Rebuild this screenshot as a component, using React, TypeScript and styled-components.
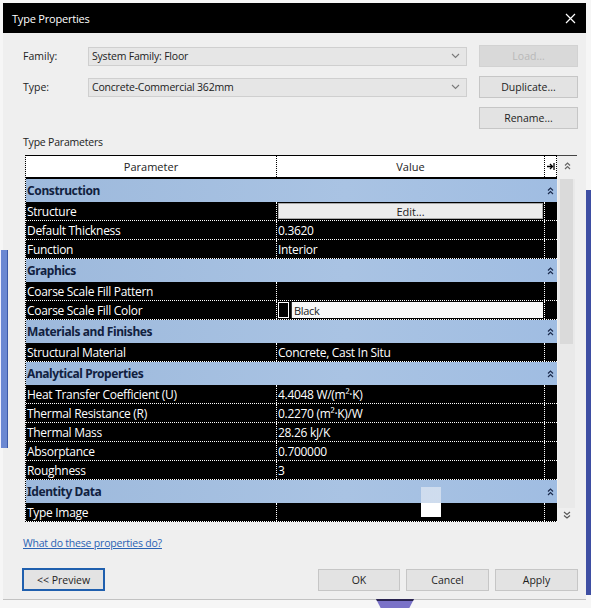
import React from "react";
import styled, { createGlobalStyle } from "styled-components";

type Row = {
  name: string;
  value: string;
  kind?: "text" | "button" | "color";
};

type Group = {
  title: string;
  rows: Row[];
};

const groups: Group[] = [
  {
    title: "Construction",
    rows: [
      { name: "Structure", value: "Edit...", kind: "button" },
      { name: "Default Thickness", value: "0.3620" },
      { name: "Function", value: "Interior" },
    ],
  },
  {
    title: "Graphics",
    rows: [
      { name: "Coarse Scale Fill Pattern", value: "" },
      { name: "Coarse Scale Fill Color", value: "Black", kind: "color" },
    ],
  },
  {
    title: "Materials and Finishes",
    rows: [{ name: "Structural Material", value: "Concrete, Cast In Situ" }],
  },
  {
    title: "Analytical Properties",
    rows: [
      { name: "Heat Transfer Coefficient (U)", value: "4.4048 W/(m²·K)" },
      { name: "Thermal Resistance (R)", value: "0.2270 (m²·K)/W" },
      { name: "Thermal Mass", value: "28.26 kJ/K" },
      { name: "Absorptance", value: "0.700000" },
      { name: "Roughness", value: "3" },
    ],
  },
  {
    title: "Identity Data",
    rows: [{ name: "Type Image", value: "" }],
  },
];

const ChevronsUp: React.FC<{ color?: string }> = ({ color = "#1b2b4d" }) => (
  <svg width="7" height="8" viewBox="0 0 7 8">
    <polyline points="1,3.5 3.5,1 6,3.5" fill="none" stroke={color} strokeWidth="1.2" />
    <polyline points="1,7 3.5,4.5 6,7" fill="none" stroke={color} strokeWidth="1.2" />
  </svg>
);

const ChevronsDown: React.FC<{ color?: string }> = ({ color = "#555" }) => (
  <svg width="8" height="8" viewBox="0 0 8 8">
    <polyline points="1,1 4,3.5 7,1" fill="none" stroke={color} strokeWidth="1.1" />
    <polyline points="1,4.5 4,7 7,4.5" fill="none" stroke={color} strokeWidth="1.1" />
  </svg>
);

const ComboArrow = () => (
  <svg width="9" height="6" viewBox="0 0 9 6">
    <polyline points="1,1 4.5,4.5 8,1" fill="none" stroke="#7a7a7a" strokeWidth="1.1" />
  </svg>
);

const SortIcon = () => (
  <svg width="8" height="7" viewBox="0 0 8 7">
    <path d="M0 3.5h5M3 1l2.5 2.5L3 6" fill="none" stroke="#000" strokeWidth="1.3" />
    <path d="M7 0v7" stroke="#000" strokeWidth="1.3" />
  </svg>
);

const CloseIcon = () => (
  <svg width="11" height="11" viewBox="0 0 11 11">
    <path d="M1 1l9 9M10 1l-9 9" stroke="#fff" strokeWidth="1.2" />
  </svg>
);

const App: React.FC = () => {
  return (
    <Page>
      <GlobalStyle />
      <Dialog>
        <TitleBar>
          <Title>Type Properties</Title>
          <CloseIcon />
        </TitleBar>

        <Body>
          <TopGrid>
            <FieldLabel>Family:</FieldLabel>
            <Combo>
              <span>System Family: Floor</span>
              <ComboArrow />
            </Combo>
            <DialogButton disabled>Load...</DialogButton>

            <FieldLabel>Type:</FieldLabel>
            <Combo>
              <span>Concrete-Commercial 362mm</span>
              <ComboArrow />
            </Combo>
            <DialogButton>Duplicate...</DialogButton>

            <GridSpacer />
            <GridSpacer />
            <DialogButton>Rename...</DialogButton>
          </TopGrid>

          <SectionLabel>Type Parameters</SectionLabel>

          <TableArea>
            <Table>
              <HeaderRow>
                <HeaderCell>Parameter</HeaderCell>
                <HeaderCell>Value</HeaderCell>
                <HeaderCell>
                  <SortIcon />
                </HeaderCell>
              </HeaderRow>

              {groups.map((group) => (
                <React.Fragment key={group.title}>
                  <GroupRow>
                    <span>{group.title}</span>
                    <ChevronsUp />
                  </GroupRow>
                  {group.rows.map((row) => (
                    <DataRow key={row.name}>
                      <NameCell>{row.name}</NameCell>
                      {row.kind === "button" ? (
                        <ValueCell $light>
                          <EditButton>{row.value}</EditButton>
                        </ValueCell>
                      ) : row.kind === "color" ? (
                        <ValueCell $light>
                          <Swatch />
                          <SwatchText>{row.value}</SwatchText>
                        </ValueCell>
                      ) : (
                        <ValueCell>{row.value}</ValueCell>
                      )}
                      <EndCell />
                    </DataRow>
                  ))}
                </React.Fragment>
              ))}

              <Glitch />
            </Table>

            <Scrollbar>
              <ScrollTop>
                <ChevronsUp color="#666" />
              </ScrollTop>
              <ScrollTrack>
                <ScrollThumb />
              </ScrollTrack>
              <ScrollBottom>
                <ChevronsDown />
              </ScrollBottom>
            </Scrollbar>
          </TableArea>

          <HelpLink>What do these properties do?</HelpLink>

          <Footer>
            <PreviewButton>&lt;&lt; Preview</PreviewButton>
            <FooterRight>
              <DialogButton $w={82}>OK</DialogButton>
              <DialogButton $w={83}>Cancel</DialogButton>
              <DialogButton $w={83}>Apply</DialogButton>
            </FooterRight>
          </Footer>
        </Body>
      </Dialog>

      <LeftStrip />
      <RightStrip />
      <BottomTab />
    </Page>
  );
};

const GlobalStyle = createGlobalStyle`
  html, body {
    margin: 0;
    padding: 0;
    background: #f4f4f4;
  }
  body {
    font-family: "Open Sans", "Noto Sans", sans-serif;
  }
`;

const Page = styled.div`
  position: relative;
  width: 591px;
  height: 608px;
  overflow: hidden;
  padding: 3px 5px 0 3px;
  box-sizing: border-box;
  background: #f6f6f6;
`;

const Dialog = styled.div`
  width: 583px;
  height: 597px;
  display: flex;
  flex-direction: column;
  background: #efefef;
  border-bottom: 1px solid #c2c2c2;
  box-sizing: border-box;
`;

const TitleBar = styled.div`
  height: 30px;
  flex-shrink: 0;
  background: #000;
  display: flex;
  align-items: center;
  justify-content: space-between;
  padding: 0 10px 0 9px;
`;

const Title = styled.span`
  color: #fff;
  font-size: 11px;
  letter-spacing: -0.2px;
`;

const Body = styled.div`
  flex: 1;
  display: flex;
  flex-direction: column;
  padding: 12px 8px 8px 20px;
`;

const TopGrid = styled.div`
  display: grid;
  grid-template-columns: 53px 379px 99px;
  grid-auto-rows: 22px;
  column-gap: 12px;
  row-gap: 9px;
  align-items: center;
`;

const GridSpacer = styled.div``;

const FieldLabel = styled.span`
  font-size: 10.5px;
  color: #222;
`;

const Combo = styled.div`
  height: 19px;
  display: flex;
  align-items: center;
  justify-content: space-between;
  padding: 0 6px 0 3px;
  background: #e6e6e6;
  border: 1px solid #cfcfcf;
  font-size: 10.5px;
  letter-spacing: -0.2px;
  color: #222;
  box-sizing: border-box;
`;

const DialogButton = styled.button<{ $w?: number }>`
  height: 22px;
  width: ${(p) => (p.$w ? `${p.$w}px` : "auto")};
  padding: 0;
  background: #e3e3e3;
  border: 1px solid #c6c6c6;
  font-family: "Open Sans", "Noto Sans", sans-serif;
  font-size: 10.5px;
  color: #1e1e1e;

  &:disabled {
    background: #d9d9d9;
    border-color: #d2d2d2;
    color: #b8b8b8;
  }
`;

const SectionLabel = styled.div`
  margin-top: 6px;
  font-size: 10.5px;
  line-height: 14px;
  color: #222;
  letter-spacing: -0.2px;
`;

const TableArea = styled.div`
  display: flex;
  margin: 6px 0 0 2px;
`;

const Table = styled.div`
  position: relative;
  width: 532px;
  display: flex;
  flex-direction: column;
  border-left: 1px dotted #000;
  box-sizing: border-box;
`;

const HeaderRow = styled.div`
  display: grid;
  grid-template-columns: 251px 268px 1fr;
  height: 24px;
  background: #fff;
  border-top: 1px solid #000;
  border-bottom: 2px solid #000;
  box-sizing: border-box;
`;

const HeaderCell = styled.div`
  display: flex;
  align-items: center;
  justify-content: center;
  font-size: 11px;
  color: #222;
  border-right: 1px dotted #000;
`;

const GroupRow = styled.div`
  height: 23px;
  display: flex;
  align-items: center;
  justify-content: space-between;
  padding: 0 3px 0 1px;
  background: linear-gradient(to right, #9db9dc, #a9c3e3 60%, #a0bde2);
  font-family: "Noto Sans", "Open Sans", sans-serif;
  font-size: 12px;
  font-weight: 700;
  color: #11213f;
  letter-spacing: -0.4px;
  box-sizing: border-box;
`;

const DataRow = styled.div`
  display: grid;
  grid-template-columns: 251px 268px 1fr;
  height: 19px;
  background: #000;
  border-bottom: 1px dotted #fff;
  box-sizing: border-box;
`;

const NameCell = styled.div`
  display: flex;
  align-items: center;
  padding-left: 1px;
  border-right: 1px dotted #fff;
  color: #fff;
  font-size: 12px;
  letter-spacing: -0.3px;
  white-space: nowrap;
  overflow: hidden;
`;

const ValueCell = styled.div<{ $light?: boolean }>`
  display: flex;
  align-items: center;
  padding: ${(p) => (p.$light ? "1px" : "0 0 0 1px")};
  border-right: 1px dotted #fff;
  color: #fff;
  font-size: 12px;
  letter-spacing: -0.3px;
  white-space: nowrap;
  overflow: hidden;
  box-sizing: border-box;
  gap: 2px;
`;

const EndCell = styled.div``;

const EditButton = styled.div`
  flex: 1;
  height: 100%;
  display: flex;
  align-items: center;
  justify-content: center;
  background: #ececec;
  border: 1px solid #a9a9a9;
  color: #222;
  font-size: 11px;
  letter-spacing: 0;
  box-sizing: border-box;
`;

const Swatch = styled.div`
  width: 11px;
  height: 100%;
  background: #000;
  border: 1px solid #fff;
  box-sizing: border-box;
`;

const SwatchText = styled.div`
  flex: 1;
  height: 100%;
  display: flex;
  align-items: center;
  padding-left: 2px;
  background: #f7f7f7;
  border-left: 1px solid #333;
  color: #222;
  font-size: 11px;
  letter-spacing: -0.3px;
`;

const Glitch = styled.div`
  position: absolute;
  left: 395px;
  top: 332px;
  width: 20px;
  height: 30px;
  background: linear-gradient(to bottom, rgba(214, 225, 240, 0.85) 0 55%, #fff 55% 100%);
`;

const Scrollbar = styled.div`
  width: 20px;
  display: flex;
  flex-direction: column;
`;

const ScrollTop = styled.div`
  height: 24px;
  display: flex;
  justify-content: center;
  align-items: flex-start;
  padding-top: 6px;
  border-top: 1px solid #444;
  box-sizing: border-box;
`;

const ScrollTrack = styled.div`
  flex: 1;
  margin: 0 2px 0 1px;
  background: #e9e9e9;
`;

const ScrollThumb = styled.div`
  height: 165px;
  margin: 0 2px;
  background: #dadada;
`;

const ScrollBottom = styled.div`
  height: 14px;
  display: flex;
  justify-content: center;
  align-items: center;
`;

const HelpLink = styled.a`
  margin-top: 14px;
  font-size: 10.5px;
  color: #2a62b4;
  text-decoration: underline;
  letter-spacing: -0.2px;
  cursor: pointer;
`;

const Footer = styled.div`
  margin-top: auto;
  display: flex;
  justify-content: space-between;
  align-items: center;
`;

const FooterRight = styled.div`
  display: flex;
  gap: 6px;
`;

const PreviewButton = styled.button`
  margin-left: -1px;
  width: 83px;
  height: 23px;
  padding: 0;
  background: #e3e3e3;
  border: 2px solid #1f5fae;
  font-family: "Open Sans", "Noto Sans", sans-serif;
  font-size: 10.5px;
  color: #1e1e1e;
`;

const LeftStrip = styled.div`
  position: absolute;
  left: 0;
  top: 250px;
  width: 8px;
  height: 198px;
  background: #6b88d2;
  border-left: 1px solid #eef;
  border-right: 1px solid #3d5aa8;
  box-sizing: border-box;
`;

const RightStrip = styled.div`
  position: absolute;
  left: 586px;
  top: 190px;
  width: 5px;
  height: 405px;
  background: #3e4ea2;
`;

const BottomTab = styled.div`
  position: absolute;
  left: 376px;
  top: 599px;
  width: 38px;
  height: 9px;
  background: #7a72c8;
  border-top: 2px solid #2a2450;
  clip-path: polygon(0 0, 100% 0, 85% 100%, 15% 100%);
`;

export default App;
